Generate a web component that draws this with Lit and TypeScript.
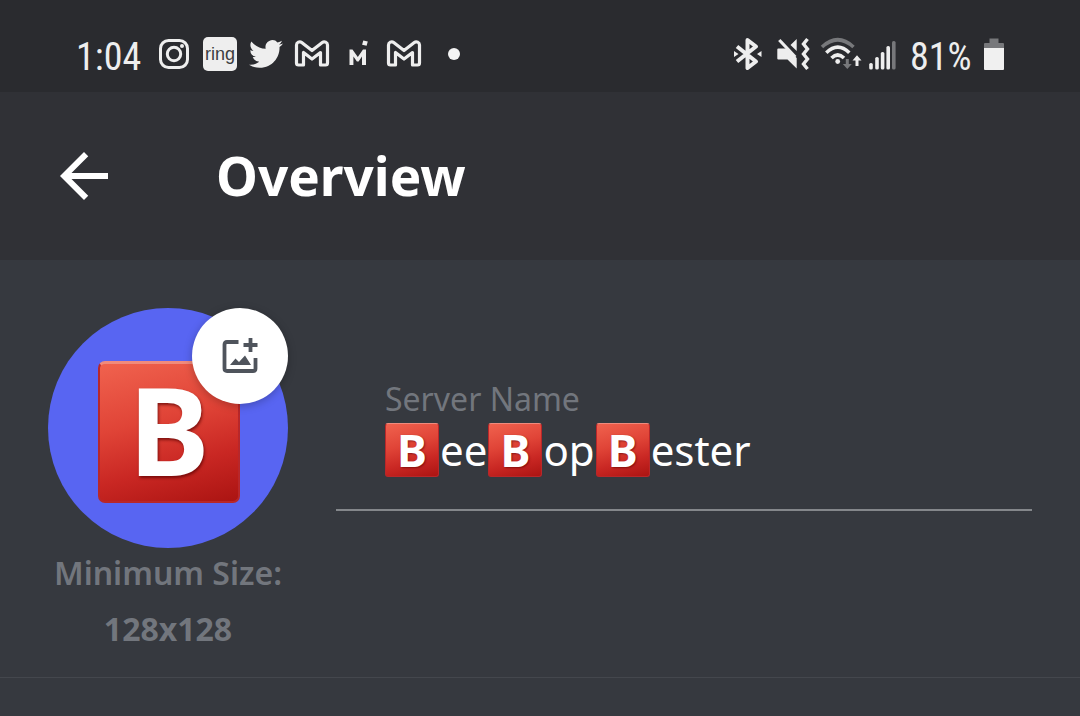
import { LitElement, html, css, svg } from "lit";
import { customElement, property, state } from "lit/decorators.js";

const BADGE = "\u{1F171}\uFE0F";

@customElement("letter-tile")
class LetterTile extends LitElement {
  @property({ reflect: true }) size = "small";

  static styles = css`
    :host {
      display: inline-flex;
      align-items: center;
      justify-content: center;
      box-sizing: border-box;
      flex: none;
      width: 54px;
      height: 54px;
      border-radius: 3px;
      border: 1px solid #b8272a;
      border-top-color: #f08a7c;
      background: linear-gradient(165deg, #f0624e 0%, #e04437 40%, #c92723 70%, #ab1412 100%);
      color: #fff;
      font: 700 45px/50px "Noto Sans", "Open Sans", sans-serif;
      text-shadow: 1px 1px 2px rgba(90, 0, 0, 0.6);
    }
    :host([size="large"]) {
      width: 142px;
      height: 142px;
      padding-bottom: 8px;
      border-radius: 7px;
      border-width: 2px;
      border-top-width: 3px;
      font-size: 122px;
      line-height: 138px;
      text-shadow: 1px 2px 3px rgba(90, 0, 0, 0.7);
    }
  `;

  render() {
    return html`<span>B</span>`;
  }
}

const gmail = html`
  <svg class="icon" viewBox="0 0 34 34" aria-label="Gmail">
    <path
      d="M1.500 26V8a3.200 3.200 0 0 1 5.200-2.500L17 13.500l10.300-8A3.200 3.200 0 0 1 32.500 8v18a2 2 0 0 1-2 2H25.500V15.500L17 22l-8.500-6.500V28h-5a2 2 0 0 1-2-2Z"
      fill="none" stroke="#eee" stroke-width="3.200" stroke-linejoin="round" />
  </svg>
`;

@customElement("status-bar")
class StatusBar extends LitElement {
  static styles = css`
    :host {
      display: flex;
      align-items: center;
      justify-content: space-between;
      box-sizing: border-box;
      height: 92px;
      padding: 16px 76px 0;
      background: #2a2b2f;
      color: #eee;
      font: 38px/46px "Liberation Sans Narrow", "Roboto Condensed", "Liberation Mono", monospace;
    }
    .group {
      display: flex;
      align-items: center;
    }
    .notices {
      gap: 12px;
    }
    .system {
      gap: 8px;
    }
    .time,
    .level {
      padding-top: 6px;
    }
    .time {
      width: 69px;
    }
    .level {
      width: 66px;
    }
    .icon {
      display: block;
      flex: none;
      width: 34px;
      height: 34px;
      overflow: visible;
    }
    .wide {
      width: 36px;
    }
    .wifi {
      width: 42px;
    }
    .signal {
      width: 32px;
    }
    .battery {
      width: 20px;
    }
    .ring {
      font: 18px "Liberation Sans", sans-serif;
    }
  `;

  render() {
    const bars = [
      [1, 26],
      [7, 20],
      [12.6, 15],
      [18.2, 9],
      [23.8, 4],
    ];
    return html`
      <div class="group notices">
        <span class="time">1:04</span>
        <svg class="icon" viewBox="0 0 34 34" aria-label="Instagram">
          <g fill="none" stroke="#eee" stroke-width="3">
            <rect x="3.500" y="3.500" width="27" height="27" rx="8" />
            <circle cx="17" cy="17" r="6.700" />
          </g>
          <circle cx="25" cy="9" r="2" fill="#eee" />
        </svg>
        <svg class="icon" viewBox="0 0 34 34" aria-label="Ring">
          <rect width="34" height="34" rx="5" fill="#eee" />
          <text class="ring" x="17" y="23" text-anchor="middle" fill="#3c3d41">ring</text>
        </svg>
        <svg class="icon" viewBox="0 0 24 24" aria-label="Twitter">
          <path
            fill="#eee"
            d="M23.953 4.570a10 10 0 0 1-2.825.775 4.958 4.958 0 0 0 2.163-2.723c-.951.555-2.005.959-3.127 1.184a4.920 4.920 0 0 0-8.384 4.482C7.690 8.095 4.067 6.130 1.640 3.162a4.822 4.822 0 0 0-.666 2.475c0 1.710.870 3.213 2.188 4.096a4.904 4.904 0 0 1-2.228-.616v.060a4.923 4.923 0 0 0 3.946 4.827 4.996 4.996 0 0 1-2.212.085 4.936 4.936 0 0 0 4.604 3.417 9.867 9.867 0 0 1-6.102 2.105c-.390 0-.779-.023-1.170-.067a13.995 13.995 0 0 0 7.557 2.209c9.053 0 13.998-7.496 13.998-13.985 0-.210 0-.420-.015-.630A9.935 9.935 0 0 0 24 4.590z" />
        </svg>
        ${gmail}
        <svg class="icon" viewBox="0 0 34 34" aria-label="Mi">
          <path d="M8.500 28V12.500h3l5.300 7.500 5.200-7.500h3V28h-4v-8.500L17.600 24.500h-1.700L12.400 19.500V28z" fill="#eee" />
          <path d="m22.300 3.500 4.500 1-1.200 4.300-4.500-1z" fill="#eee" />
        </svg>
        ${gmail}
        <svg class="icon" viewBox="0 0 34 34" aria-label="More notifications">
          <circle cx="21" cy="17" r="6" fill="#f4f4f4" />
        </svg>
      </div>
      <div class="group system">
        <svg class="icon wide" viewBox="0 0 36 34" aria-label="Bluetooth">
          <path d="M5 9.500 24 24.500 15.500 31V3L24 9.500 5 24.500" fill="none" stroke="#eee" stroke-width="4" stroke-linejoin="round" />
          <path d="M2 14v6l4.500-3zM29.500 14v6L25 17z" fill="#eee" />
        </svg>
        <svg class="icon wide" viewBox="0 0 36 34" aria-label="Vibrate">
          <path d="M1.300 12.500q0-1 1-1H11l9.700 9.500v10.500l-9.200-9H2.300q-1 0-1-1zM14.500 8l6.200-6v12z" fill="#eee" />
          <path d="m3.300 3 16 17" stroke="#eee" stroke-width="3.200" />
          <path d="m31.500 2-4 5 4 5-4 5 4 5-4 5 4 5" fill="none" stroke="#eee" stroke-width="3.400" />
        </svg>
        <svg class="icon wifi" viewBox="0 0 42 34" aria-label="Wi-Fi">
          <g fill="none" stroke-width="3.600">
            <path d="M2 10Q17.700-4.500 33.500 10" stroke="#77787b" />
            <path d="M6.300 15.700q11.500-11 23 0M11.500 21q6.200-6 12.500 0" stroke="#eee" />
          </g>
          <circle cx="17.700" cy="24.500" r="2.400" fill="#eee" />
          <path d="M25.800 22h3v5h3l-4.500 5-4.500-5h3z" fill="#77787b" />
          <path d="M35.500 29h3v-5.500h3L37 18.300l-4.500 5.200h3z" fill="#eee" />
        </svg>
        <svg class="icon signal" viewBox="0 0 32 34" aria-label="Signal">
          ${bars.map(
            ([x, y], i) =>
              svg`<rect x=${x - 1.8} y=${y} width="3.600" height=${32.5 - y} rx="1.600" fill=${i === 4 ? "#77787b" : "#eee"} />`
          )}
        </svg>
        <span class="level">81%</span>
        <svg class="icon battery" viewBox="0 0 20 34" aria-label="Battery">
          <path d="M5.500 1.500h9V6H19q1 0 1 1v4H0V7q0-1 1-1h4.500z" fill="#77787b" />
          <path d="M0 11h20v21q0 1-1 1H1q-1 0-1-1z" fill="#f0f0f0" />
        </svg>
      </div>
    `;
  }
}

@customElement("app-root")
class AppRoot extends LitElement {
  @state() private name = `${BADGE}ee${BADGE}op${BADGE}ester`;

  static styles = css`
    :host {
      display: block;
      min-height: 100vh;
      background: #36393f;
      color: #fff;
      font-family: "Noto Sans", "Open Sans", sans-serif;
    }
    button {
      padding: 0;
      border: 0;
      background: none;
      cursor: pointer;
    }
    svg {
      display: block;
    }
    .header {
      display: flex;
      align-items: center;
      gap: 96px;
      padding: 48px;
      background: #303136;
    }
    .back svg {
      width: 72px;
      height: 72px;
    }
    .title {
      margin: 0;
      font-size: 53px;
      line-height: 72px;
      font-weight: 700;
    }
    .overview {
      display: flex;
      gap: 48px;
      padding: 48px 48px 20px;
      border-bottom: 1px solid #44474d;
    }
    .icon-column {
      flex: none;
      width: 240px;
    }
    .avatar {
      position: relative;
      display: flex;
      align-items: center;
      justify-content: center;
      height: 240px;
      padding-top: 8px;
      padding-left: 2px;
      box-sizing: border-box;
      border-radius: 50%;
      background: #5865f2;
    }
    .upload {
      position: absolute;
      top: 0;
      right: 0;
      display: grid;
      place-items: center;
      width: 96px;
      height: 96px;
      border-radius: 50%;
      background: #fff;
      box-shadow: 0 2px 8px rgba(0, 0, 0, 0.25);
    }
    .upload svg {
      width: 36px;
      height: 36px;
    }
    .hint {
      margin: -3px 0 0;
      color: #72767d;
      font-size: 32px;
      line-height: 56px;
      font-weight: 600;
      text-align: center;
    }
    .hint strong {
      display: block;
      font-weight: 700;
    }
    .field {
      flex: 1;
      min-width: 0;
      align-self: flex-start;
      margin-top: 69px;
      padding: 0 49px 30px;
      border-bottom: 2px solid #84878b;
    }
    .label {
      display: block;
      color: #72767d;
      font-size: 32px;
      line-height: 44px;
    }
    .editor {
      display: grid;
      font-size: 42px;
      line-height: 58px;
    }
    .editor > * {
      grid-area: 1 / 1;
    }
    .preview {
      display: flex;
      align-items: center;
      gap: 1px;
      white-space: pre;
      pointer-events: none;
    }
    .input {
      width: 100%;
      min-width: 0;
      box-sizing: border-box;
      padding: 0;
      border: 0;
      outline: 0;
      background: none;
      color: transparent;
      caret-color: #fff;
      font: inherit;
    }
  `;

  private onInput(e: Event) {
    this.name = (e.target as HTMLInputElement).value;
  }

  private renderName() {
    return this.name
      .split(/(\u{1F171}\uFE0F?)/u)
      .filter((part) => part)
      .map((part) =>
        part.startsWith("\u{1F171}") ? html`<letter-tile></letter-tile>` : html`<span>${part}</span>`
      );
  }

  render() {
    return html`
      <status-bar></status-bar>
      <header class="header">
        <button class="back" aria-label="Back">
          <svg viewBox="0 0 24 24">
            <path fill="#fff" d="M20 11H7.830l5.590-5.590L12 4l-8 8 8 8 1.410-1.410L7.830 13H20v-2z" />
          </svg>
        </button>
        <h1 class="title">Overview</h1>
      </header>
      <main class="overview">
        <div class="icon-column">
          <div class="avatar">
            <letter-tile size="large"></letter-tile>
            <button class="upload" aria-label="Upload image">
              <svg viewBox="0 0 36 36">
                <path
                  d="M16.500 4H5Q2.500 4 2.500 6.500v24Q2.500 33 5 33h26q2.500 0 2.500-2.500V20M28.500 0v14M21.500 7h14"
                  fill="none" stroke="#4f545c" stroke-width="3.800" />
                <path d="m8 27 5.500-6.500 3.500 3.500 6-6.500L29 27z" fill="#4f545c" />
              </svg>
            </button>
          </div>
          <p class="hint">Minimum Size: <strong>128x128</strong></p>
        </div>
        <div class="field">
          <label class="label" for="server-name">Server Name</label>
          <div class="editor">
            <div class="preview" aria-hidden="true">${this.renderName()}</div>
            <input class="input" id="server-name" type="text" .value=${this.name} @input=${this.onInput} />
          </div>
        </div>
      </main>
    `;
  }
}
